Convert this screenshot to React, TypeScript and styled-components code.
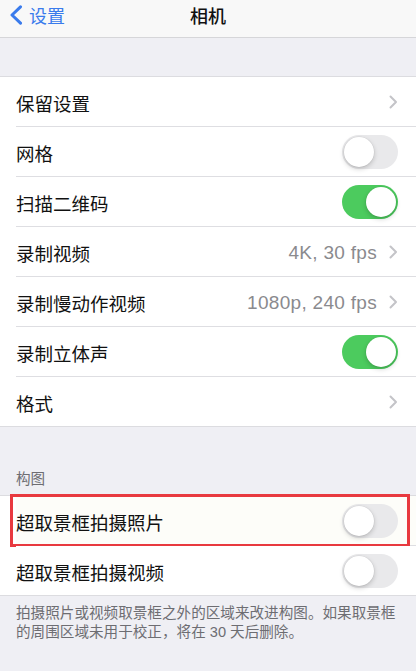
import React from "react";
import styled, { createGlobalStyle } from "styled-components";

const Global = createGlobalStyle`
  html, body { margin: 0; padding: 0; }
  body {
    background: #efeff4;
    font-family: "Liberation Sans", "Noto Sans CJK SC", sans-serif;
    -webkit-font-smoothing: antialiased;
  }
`;

const Page = styled.div`
  width: 416px;
  height: 671px;
  background: #efeff4;
  overflow: hidden;
  display: flex;
  flex-direction: column;
`;

const NavBar = styled.div`
  height: 38px;
  flex: none;
  background: #f8f8f8;
  border-bottom: 1px solid #d6d6d9;
  box-sizing: border-box;
  display: grid;
  grid-template-columns: 1fr auto 1fr;
  align-items: center;
`;

const Back = styled.div`
  display: flex;
  align-items: center;
  gap: 6px;
  padding-left: 9px;
  color: #3a7bec;
  font-size: 18px;
  margin-top: -7px;
`;

const Title = styled.div`
  font-size: 18px;
  font-weight: 500;
  color: #111;
  margin-top: -7px;
`;

const Spacer = styled.div<{ h: number }>`
  height: ${(p) => p.h}px;
  flex: none;
`;

const Group = styled.div`
  background: #fff;
  border-top: 1px solid #dcdce0;
  border-bottom: 1px solid #dcdce0;
  flex: none;
`;

const Row = styled.div<{ tint?: boolean; last?: boolean }>`
  position: relative;
  height: ${(p) => (p.last ? 49 : 50)}px;
  box-sizing: border-box;
  display: flex;
  align-items: center;
  margin-left: 16px;
  padding-right: 18px;
  border-bottom: ${(p) => (p.last ? "none" : "1px solid #dedee2")};
  background: ${(p) => (p.tint ? "#fdfdf9" : "#fff")};
`;

const Label = styled.div`
  flex: 1;
  font-size: 18.5px;
  color: #111;
  padding-top: 3px;
`;

const Value = styled.div`
  font-size: 19px;
  color: #8a8a8e;
  margin-right: 12px;
  padding-top: 2px;
  letter-spacing: 0.3px;
`;

const Track = styled.div<{ on?: boolean }>`
  width: 56px;
  height: 34px;
  border-radius: 17px;
  box-sizing: border-box;
  background: ${(p) => (p.on ? "#4ccb5e" : "#e9e9eb")};
  position: relative;
  flex: none;
`;

const Knob = styled.div<{ on?: boolean }>`
  position: absolute;
  top: 2px;
  left: ${(p) => (p.on ? "24px" : "2px")};
  width: 30px;
  height: 30px;
  border-radius: 50%;
  background: #fff;
  box-shadow: 0 2px 5px rgba(0, 0, 0, 0.2), 0 0 0 0.5px rgba(0, 0, 0, 0.06);
`;

const Highlight = styled.div`
  position: absolute;
  left: -6px;
  right: 6px;
  top: -2px;
  bottom: -2px;
  border: 3px solid #e8393f;
  pointer-events: none;
`;

const Header = styled.div`
  padding: 0 16px 6px;
  font-size: 14.6px;
  line-height: 20px;
  color: #6d6d72;
`;

const Footnote = styled.div`
  padding: 8px 16px 0;
  font-size: 14.6px;
  line-height: 19px;
  color: #6d6d72;
`;

const Chevron = () => (
  <svg width="9" height="14" viewBox="0 0 9 14" style={{ flex: "none" }}>
    <path d="M1.5 1.5 L7 7 L1.5 12.5" fill="none" stroke="#c4c4c8" strokeWidth="2" strokeLinecap="round" strokeLinejoin="round" />
  </svg>
);

const BackChevron = () => (
  <svg width="14" height="20" viewBox="0 0 14 20">
    <path d="M11.5 1.8 L3 10 L11.5 18.2" fill="none" stroke="#3a7bec" strokeWidth="3" strokeLinecap="round" strokeLinejoin="round" />
  </svg>
);

const Toggle = ({ on }: { on?: boolean }) => (
  <Track on={on}>
    <Knob on={on} />
  </Track>
);

type Item = { label: string; value?: string; chevron?: boolean; toggle?: boolean; on?: boolean };

const items: Item[] = [
  { label: "保留设置", chevron: true },
  { label: "网格", toggle: true },
  { label: "扫描二维码", toggle: true, on: true },
  { label: "录制视频", value: "4K, 30 fps", chevron: true },
  { label: "录制慢动作视频", value: "1080p, 240 fps", chevron: true },
  { label: "录制立体声", toggle: true, on: true },
  { label: "格式", chevron: true },
];

export default function App() {
  return (
    <Page>
      <Global />
      <NavBar>
        <Back>
          <BackChevron />
          <span>设置</span>
        </Back>
        <Title>相机</Title>
        <div />
      </NavBar>
      <Spacer h={38} />
      <Group>
        {items.map((it, i) => (
          <Row key={it.label} last={i === items.length - 1}>
            <Label>{it.label}</Label>
            {it.value && <Value>{it.value}</Value>}
            {it.chevron && <Chevron />}
            {it.toggle && <Toggle on={it.on} />}
          </Row>
        ))}
      </Group>
      <Spacer h={42} />
      <Header>构图</Header>
      <Group>
        <Row tint>
          <Label>超取景框拍摄照片</Label>
          <Toggle />
          <Highlight />
        </Row>
        <Row last>
          <Label>超取景框拍摄视频</Label>
          <Toggle />
        </Row>
      </Group>
      <Footnote>
        拍摄照片或视频取景框之外的区域来改进构图。如果取景框
        <br />
        的周围区域未用于校正，将在 30 天后删除。
      </Footnote>
    </Page>
  );
}
